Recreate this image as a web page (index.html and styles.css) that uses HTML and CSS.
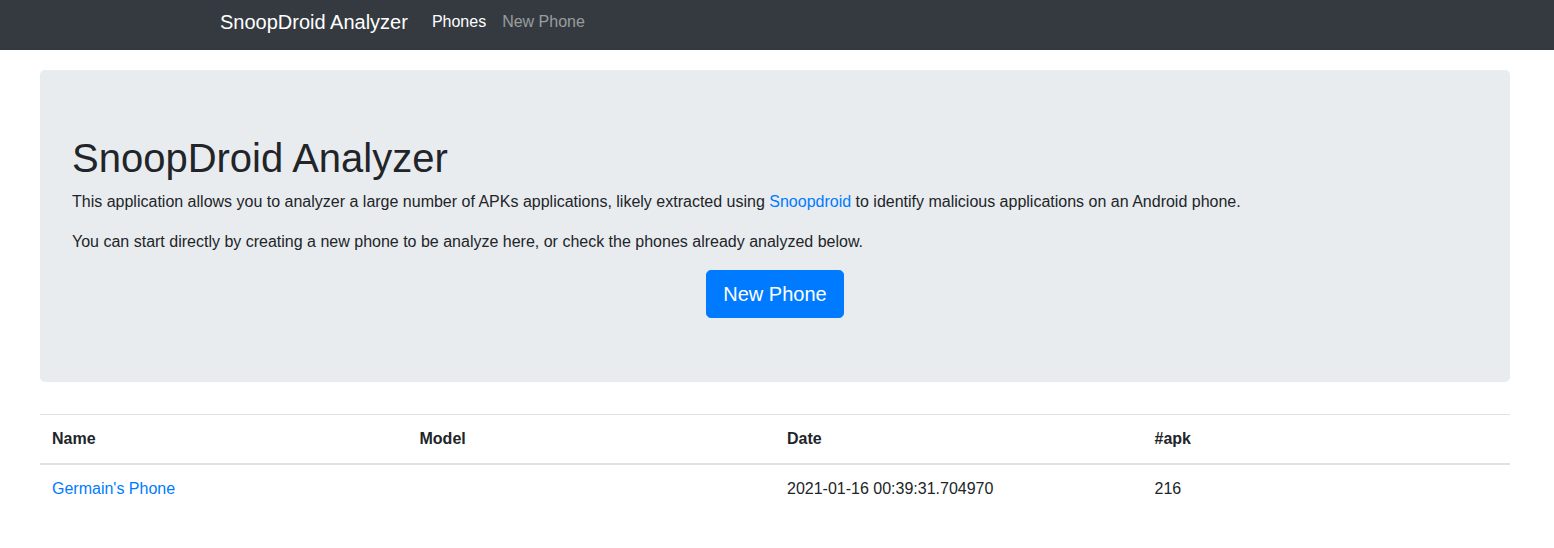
FILE: index.html
```html
<!DOCTYPE html>
<html lang="en">
<head>
<meta charset="utf-8">
<title>SnoopDroid Analyzer</title>
<link rel="stylesheet" href="styles.css">
</head>
<body>
<nav class="navbar">
  <div class="navbar-inner">
    <a class="brand" href="#">SnoopDroid Analyzer</a>
    <a class="nav-link active" href="#">Phones</a>
    <a class="nav-link" href="#">New Phone</a>
  </div>
</nav>
<main class="main">
  <section class="jumbotron">
    <h1 class="title">SnoopDroid Analyzer</h1>
    <p class="lead-text">This application allows you to analyzer a large number of APKs applications, likely extracted using <a href="#" class="link">Snoopdroid</a> to identify malicious applications on an Android phone.</p>
    <p class="lead-text">You can start directly by creating a new phone to be analyze here, or check the phones already analyzed below.</p>
    <div class="actions"><a href="#" class="btn">New Phone</a></div>
  </section>
  <table class="phones">
    <thead>
      <tr><th>Name</th><th>Model</th><th>Date</th><th>#apk</th></tr>
    </thead>
    <tbody>
      <tr><td><a href="#" class="link">Germain's Phone</a></td><td></td><td>2021-01-16 00:39:31.704970</td><td>216</td></tr>
    </tbody>
  </table>
</main>
</body>
</html>
```
FILE: styles.css
```css
* { box-sizing: border-box; }
html, body { margin: 0; padding: 0; }
body {
  font-family: "Liberation Sans", Arial, Helvetica, sans-serif;
  font-size: 16px;
  line-height: 1.5;
  color: #212529;
  background: #fff;
}
a { text-decoration: none; }
.navbar {
  background: #343a40;
  height: 50px;
  padding-bottom: 6px;
  display: flex;
  align-items: center;
}
.navbar-inner {
  width: 100%;
  max-width: 1114px;
  margin: 0 auto;
  display: flex;
  align-items: center;
}
.brand {
  color: #fff;
  font-size: 20px;
  line-height: 30px;
  margin-right: 16px;
}
.nav-link {
  color: rgba(255,255,255,.5);
  padding: 0 8px;
  line-height: 24px;
}
.nav-link.active { color: #fff; }
.main {
  margin: 20px 44px 0 40px;
}
.jumbotron {
  background: #e9ecef;
  border-radius: 4.8px;
  padding: 64px 32px;
  margin-bottom: 32px;
}
.title {
  font-size: 40px;
  font-weight: 500;
  line-height: 1.2;
  margin: 0 0 8px;
}
.lead-text {
  margin: 0 0 16px;
  font-size: 16px;
  line-height: 24px;
}
.link { color: #007bff; }
.actions {
  display: flex;
  justify-content: center;
}
.btn {
  display: inline-block;
  background: #007bff;
  color: #fff;
  font-size: 20px;
  line-height: 30px;
  padding: 8px 16px;
  border: 1px solid #007bff;
  border-radius: 4.8px;
}
.phones {
  width: 100%;
  border-collapse: collapse;
  table-layout: fixed;
  font-size: 16px;
}
.phones th, .phones td {
  text-align: left;
  padding: 12px;
  line-height: 24px;
  border-top: 1px solid #dee2e6;
  vertical-align: top;
}
.phones th {
  font-weight: 700;
  border-bottom: 2px solid #dee2e6;
}
.phones td { border-top: none; }
```
